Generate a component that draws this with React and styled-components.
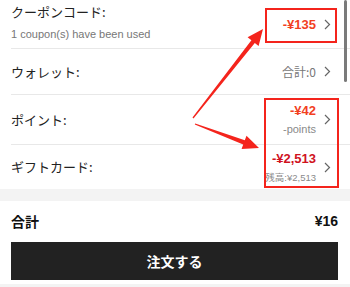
import React from 'react';
import styled, { createGlobalStyle } from 'styled-components';

const Global = createGlobalStyle`
  html, body {
    margin: 0;
    padding: 0;
    background: #FFFFFF;
  }
  body {
    font-family: "Liberation Sans", "Noto Sans CJK JP", sans-serif;
    -webkit-font-smoothing: antialiased;
  }
`;

const Page = styled.div`
  position: relative;
  width: 350px;
  height: 287px;
  overflow: hidden;
  background: #FFFFFF;
`;

const List = styled.div`
  display: flex;
  flex-direction: column;
`;

const Row = styled.div`
  display: flex;
  align-items: center;
  justify-content: space-between;
  height: ${props => props.h}px;
  margin-left: 11px;
  padding-right: 19px;
  border-bottom: ${props => (props.last ? 'none' : '1px solid #E8E8E8')};
  box-sizing: content-box;
`;

const Left = styled.div`
  display: flex;
  flex-direction: column;
  gap: 8px;
  padding-bottom: ${props => (props.sub ? '3px' : '0')};
`;

const Label = styled.div`
  font-family: "Noto Sans CJK JP", sans-serif;
  font-size: 13px;
  line-height: 16px;
  color: #222222;
`;

const SubLabel = styled.div`
  font-family: "Liberation Sans", sans-serif;
  font-size: 11px;
  line-height: 13px;
  color: #777777;
`;

const Right = styled.div`
  display: flex;
  align-items: center;
`;

const Values = styled.div`
  display: flex;
  flex-direction: column;
  align-items: flex-end;
  gap: 5px;
`;

const Amount = styled.div`
  font-family: "Liberation Sans", sans-serif;
  font-weight: 700;
  font-size: 13px;
  line-height: 15px;
  color: ${props => props.color || '#F2401F'};
`;

const Note = styled.div`
  font-family: "Liberation Sans", "Noto Sans CJK JP", sans-serif;
  font-size: ${props => (props.small ? '9.5px' : '11px')};
  line-height: 13px;
  color: #8A8A8A;
`;

const Plain = styled.div`
  font-family: "Noto Sans CJK JP", sans-serif;
  font-size: 12px;
  line-height: 15px;
  color: #777777;
`;

const ChevronWrap = styled.div`
  display: flex;
  margin-left: 8px;
`;

const Gap = styled.div`
  height: 12px;
  background: #F3F3F3;
`;

const TotalRow = styled.div`
  display: flex;
  align-items: center;
  justify-content: space-between;
  padding: 4px 12px 0 11px;
  height: 32px;
`;

const TotalLabel = styled.div`
  font-family: "Noto Sans CJK JP", sans-serif;
  font-weight: 700;
  font-size: 14px;
  color: #111111;
`;

const TotalValue = styled.div`
  font-family: "Liberation Sans", sans-serif;
  font-weight: 700;
  font-size: 14px;
  color: #111111;
`;

const Button = styled.button`
  display: flex;
  align-items: center;
  justify-content: center;
  margin: 5px 12px 0 11px;
  width: 327px;
  height: 38px;
  border: none;
  background: #222222;
  color: #FFFFFF;
  font-family: "Noto Sans CJK JP", sans-serif;
  font-weight: 700;
  font-size: 14px;
  padding: 0;
`;

const BottomBand = styled.div`
  margin-top: 4px;
  height: 10px;
  background: #F3F3F3;
`;

const Scrollbar = styled.div`
  position: absolute;
  left: 344px;
  top: 0;
  width: 3px;
  height: 82px;
  border-radius: 2px;
  background: #7A7A7A;
`;

const Overlay = styled.svg`
  position: absolute;
  left: 0;
  top: 0;
  pointer-events: none;
`;

const Chevron = () => (
  <ChevronWrap>
    <svg width="7" height="11" viewBox="0 0 7 11">
      <path d="M1 1 L5.5 5.5 L1 10" fill="none" stroke="#666" strokeWidth="1.2" />
    </svg>
  </ChevronWrap>
);

// tapered arrow: thin tail, wide head
const arrowPoints = (x1, y1, x2, y2) => {
  const dx = x2 - x1;
  const dy = y2 - y1;
  const len = Math.sqrt(dx * dx + dy * dy);
  const ux = dx / len;
  const uy = dy / len;
  const nx = -uy;
  const ny = ux;
  const headLen = 16;
  const headW = 7;
  const bx = x2 - ux * headLen;
  const by = y2 - uy * headLen;
  const p = (x, y) => `${x.toFixed(1)},${y.toFixed(1)}`;
  return [
    p(x1 + nx * 0.6, y1 + ny * 0.6),
    p(bx + nx * 2.2, by + ny * 2.2),
    p(bx + nx * headW, by + ny * headW),
    p(x2, y2),
    p(bx - nx * headW, by - ny * headW),
    p(bx - nx * 2.2, by - ny * 2.2),
    p(x1 - nx * 0.6, y1 - ny * 0.6),
  ].join(' ');
};

const RED = '#F4241C';

const App = () => (
  <Page>
    <Global />
    <List>
      <Row h={48}>
        <Left sub>
          <Label>クーポンコード:</Label>
          <SubLabel>1 coupon(s) have been used</SubLabel>
        </Left>
        <Right>
          <Amount>-¥135</Amount>
          <Chevron />
        </Right>
      </Row>
      <Row h={45}>
        <Left>
          <Label>ウォレット:</Label>
        </Left>
        <Right>
          <Plain>合計:0</Plain>
          <Chevron />
        </Right>
      </Row>
      <Row h={49}>
        <Left>
          <Label>ポイント:</Label>
        </Left>
        <Right>
          <Values>
            <Amount>-¥42</Amount>
            <Note>-points</Note>
          </Values>
          <Chevron />
        </Right>
      </Row>
      <Row h={44} last>
        <Left>
          <Label>ギフトカード:</Label>
        </Left>
        <Right>
          <Values>
            <Amount color="#D0121E">-¥2,513</Amount>
            <Note small>残高:¥2,513</Note>
          </Values>
          <Chevron />
        </Right>
      </Row>
    </List>
    <Gap />
    <TotalRow>
      <TotalLabel>合計</TotalLabel>
      <TotalValue>¥16</TotalValue>
    </TotalRow>
    <Button>注文する</Button>
    <BottomBand />
    <Scrollbar />
    <Overlay width="350" height="287" viewBox="0 0 350 287">
      <rect x="266" y="9" width="70" height="33" fill="none" stroke={RED} strokeWidth="2" />
      <rect x="265" y="99" width="73" height="88" fill="none" stroke={RED} strokeWidth="2" />
      <polygon points={arrowPoints(193, 118, 263, 29)} fill={RED} />
      <polygon points={arrowPoints(195, 124, 259, 148)} fill={RED} />
    </Overlay>
  </Page>
);

export default App;
